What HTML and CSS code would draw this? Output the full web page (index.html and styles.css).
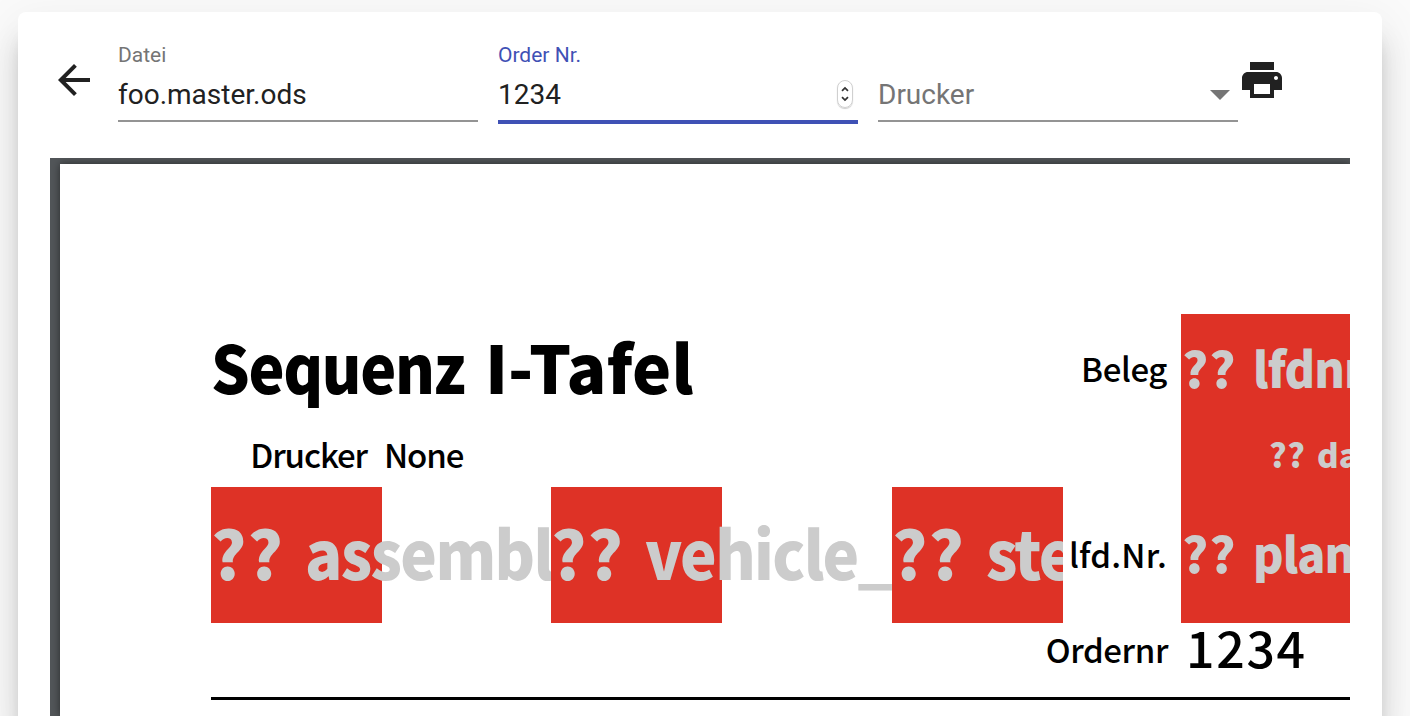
FILE: index.html
```html
<!DOCTYPE html>
<html lang="de">
<head>
<meta charset="utf-8">
<title>Druckvorschau</title>
<link rel="stylesheet" href="styles.css">
</head>
<body>
<main class="card">
  <header class="toolbar">
    <svg class="icon back" viewBox="0 0 24 24"><path d="M20 11H7.83l5.59-5.59L12 4l-8 8 8 8 1.41-1.41L7.83 13H20v-2z"/></svg>
    <div class="field">
      <span class="label">Datei</span>
      <div class="value"><span class="file">foo.master.ods</span></div>
    </div>
    <div class="field focused">
      <span class="label order">Order Nr.</span>
      <div class="value"><span>1234</span>
        <svg class="spinner" viewBox="0 0 16 28"><path d="M4.6 10.4 8 7l3.4 3.4M4.6 17.6 8 21l3.4-3.4"/></svg>
      </div>
    </div>
    <div class="field">
      <span class="label"></span>
      <div class="value placeholder"><span>Drucker</span><i class="caret"></i></div>
    </div>
    <svg class="icon" viewBox="0 0 24 24"><path d="M19 8H5c-1.66 0-3 1.34-3 3v6h4v4h12v-4h4v-6c0-1.66-1.34-3-3-3zm-3 11H8v-5h8v5zm3-7c-.55 0-1-.45-1-1s.45-1 1-1 1 .45 1 1-.45 1-1 1zm-1-9H6v4h12V3z"/></svg>
  </header>
  <section class="viewer">
    <div class="page">
      <div class="sheet">
        <div class="cell title"><span class="xl lead">Sequenz</span><span class="xl word">I-Tafel</span></div>
        <div class="cell end beleg"><span class="sm">Beleg</span></div>
        <div class="cell red lfdnr"><span class="lg marks">??</span><span class="lg word">lfdnr</span></div>

        <div class="cell end printer"><span class="sm tight">Drucker</span></div>
        <div class="cell none"><span class="sm tight">None</span></div>
        <div class="cell red date"><span class="md marks">??</span><span class="md word">date</span></div>

        <div class="cell red big"><span class="xl marks">??</span><span class="xl word narrow">assembly</span></div>
        <div class="cell"></div>
        <div class="cell red big"><span class="xl marks">??</span><span class="xl word narrow">vehicle_</span></div>
        <div class="cell"></div>
        <div class="cell red big clip"><span class="xl marks">??</span><span class="xl word narrow">ste</span></div>
        <div class="cell end nr"><span class="sm wide">lfd.Nr.</span></div>
        <div class="cell red plan"><span class="lg marks">??</span><span class="lg word">plan</span></div>

        <div class="cell end ordernr"><span class="sm">Ordernr</span></div>
        <div class="cell number"><span class="num">1234</span></div>
      </div>
    </div>
  </section>
</main>
</body>
</html>
```
FILE: styles.css
```css
* { box-sizing: border-box; }
html, body { margin: 0; height: 100%; }
body {
  padding: 12px 28px 0 18px;
  background: #fafafa;
  overflow: hidden;
  font-family: Roboto, sans-serif;
  color: #212121;
}
.card {
  height: 704px;
  padding: 28px 32px 0;
  background: #fff;
  border-radius: 8px 8px 0 0;
  box-shadow: 0 22px 16px -8px rgba(0,0,0,.2), 0 32px 30px 2px rgba(0,0,0,.12), 0 12px 44px 8px rgba(0,0,0,.05);
}
.toolbar { display: flex; height: 118px; }
.icon { width: 48px; height: 48px; margin-top: 16px; fill: #212121; flex: none; }
.field { width: 360px; height: 82px; border-bottom: 2px solid #949494; flex: none; }
.back, .field:not(:nth-child(4)) { margin-right: 20px; }
.field.focused { height: 84px; border-bottom: 4px solid #3f51b5; }
.label { display: block; height: 30px; line-height: 30px; font-size: 21px; color: #757575; }
.focused .label { color: #3f51b5; }
.value {
  display: flex;
  align-items: center;
  justify-content: space-between;
  height: 50px;
  font-size: 28px;
  line-height: 50px;
}
.placeholder { color: #757575; }
.spinner { width: 16px; height: 28px; margin: 0 5px 2px 0; border: 1px solid #d0d0d0; border-radius: 8px; box-shadow: 0 1px 1px rgba(0,0,0,.2); fill: none; stroke: #333; stroke-width: 2; }
.caret { margin-right: 8px; border: 10px solid transparent; border-top-color: #757575; border-bottom: 0; }

.viewer { height: 558px; padding: 6px 0 0 10px; background: #525659; overflow: hidden; }
.page { height: 552px; padding: 150px 0 0 151px; background: #fff; box-shadow: 0 0 8px rgba(0,0,0,.5); }
.sheet {
  display: grid;
  grid-template-columns: 171px 169px 171px 170px 171px 118px 169px;
  grid-template-rows: 113px 60px 136px 74px;
  border-bottom: 3px solid #000;
  font-family: "Noto Sans CJK SC", sans-serif;
  color: #000;
}
.cell { display: flex; white-space: nowrap; min-width: 0; }
.cell span { line-height: 1; flex: none; transform-origin: 0 0; }
.end { justify-content: flex-end; }
.red { background: #de3226; color: #ccc; }
.xl { font-size: 66px; font-weight: 900; }
.lg { font-size: 49px; font-weight: 900; }
.md { font-size: 33px; font-weight: 900; }
.sm { font-size: 33px; font-weight: 500; letter-spacing: -.4px; }
.tight { letter-spacing: -1.1px; }
.wide { letter-spacing: .2px; }
.num { font-size: 50px; font-weight: 500; letter-spacing: 1.7px; }

/* The question marks keep a fixed slot so that the field name lines up after them. */
.xl.marks { width: 94px; letter-spacing: 1px; }
.lg.marks { width: 71px; letter-spacing: 1px; }
.md.marks { width: 48px; letter-spacing: .5px; }
.lg.word { letter-spacing: -1px; transform: scaleX(.95); }
.narrow { letter-spacing: -1.8px; transform: scaleX(.935); }
.lead { width: 274px; letter-spacing: -1.5px; transform: scaleX(.92); }

.title { grid-column: 1 / 6; padding-top: 18px; }
.beleg { padding: 38px 14px 0 0; }
.lfdnr { padding: 28px 0 0 1px; overflow: hidden; }
.printer { padding: 11px 15px 0 0; }
.none { grid-column: 2 / 7; padding: 11px 0 0 2px; }
.date { padding: 11px 0 0 88px; overflow: hidden; }
/* Each field paints over the overflowing text of the one before it. */
.big { isolation: isolate; padding: 31px 0 0; }
.clip { overflow: hidden; }
.nr { padding: 51px 14px 0 0; }
.plan { padding: 40px 0 0 1px; overflow: hidden; }
.ordernr { grid-column: 1 / 7; padding: 10px 13px 0 0; letter-spacing: -.5px; }
.number { padding-left: 5px; margin-top: -2px; }
```
